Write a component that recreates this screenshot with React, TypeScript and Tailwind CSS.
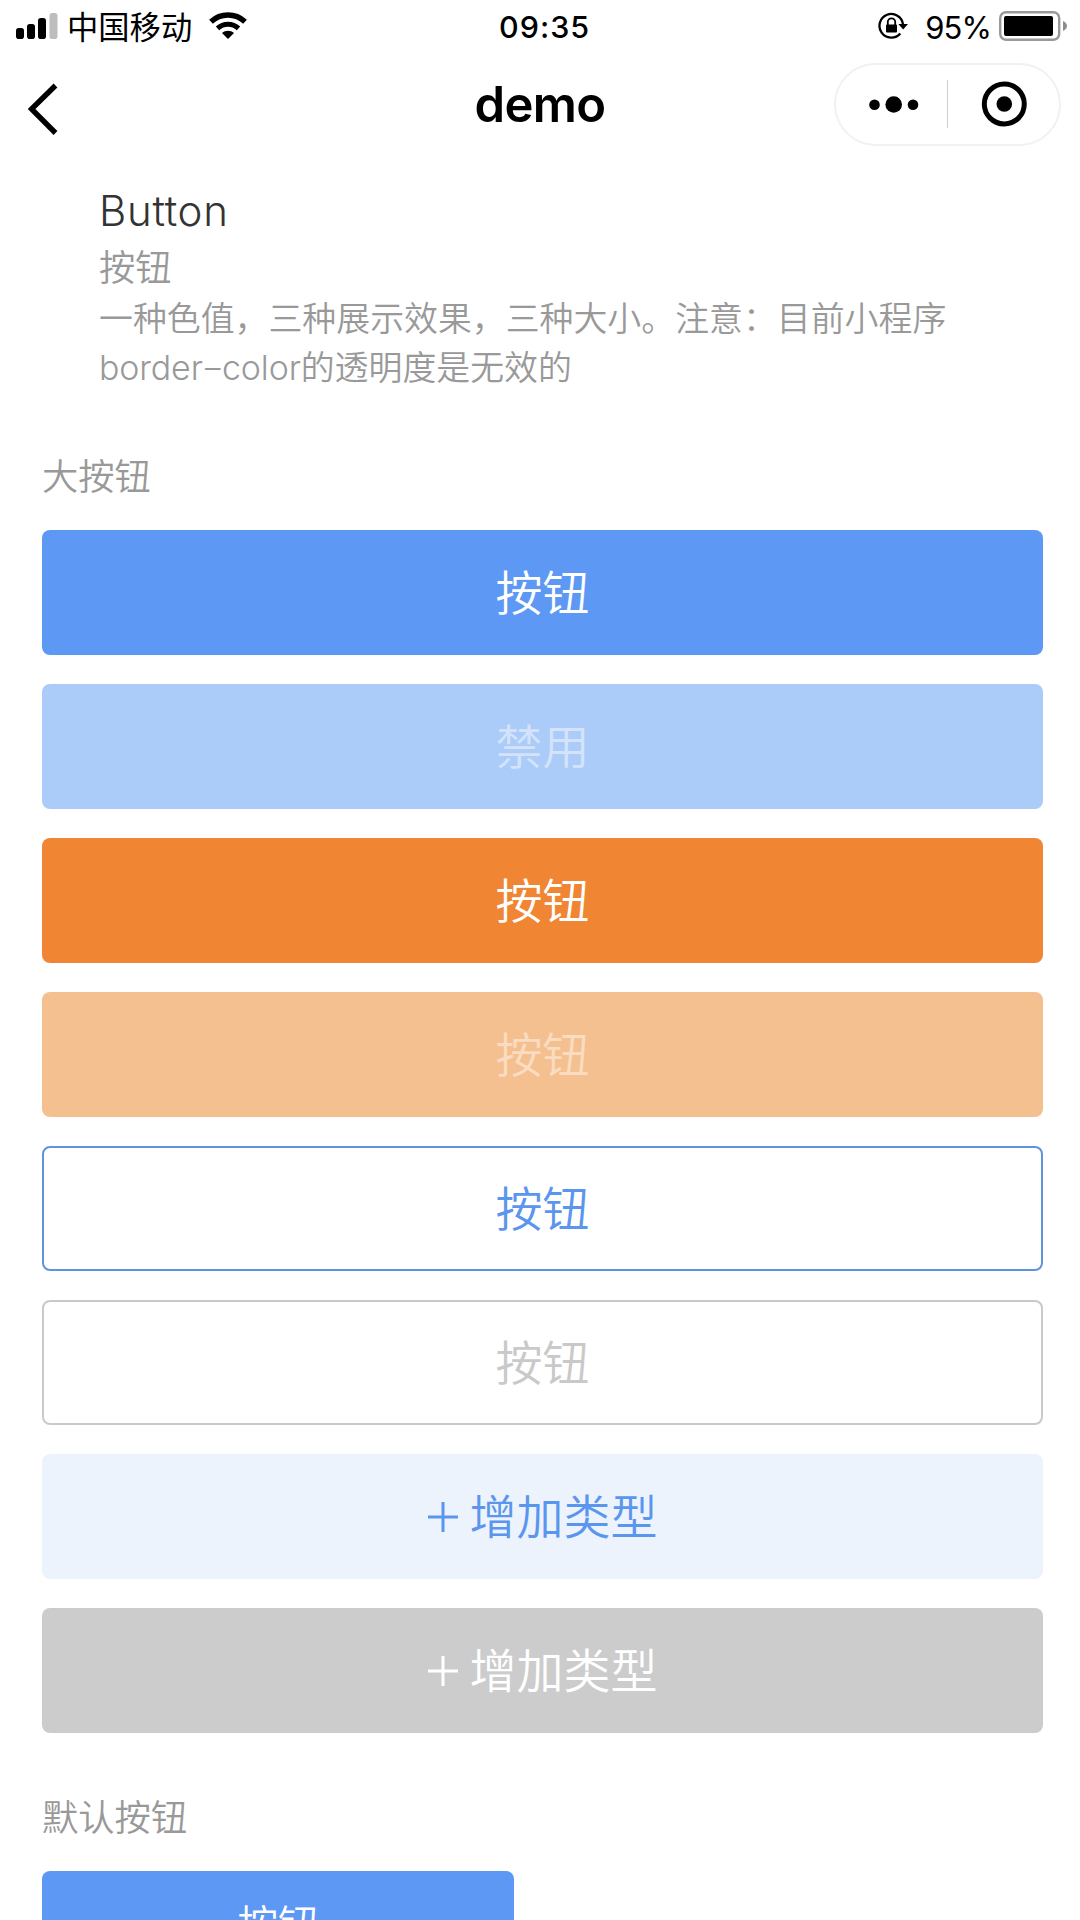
import clsx from "clsx";

const bigButtons = [
  { label: "按钮", className: "bg-[#5d98f4] text-white" },
  { label: "禁用", className: "bg-[#abcbf8] text-[#d4e3fb]" },
  { label: "按钮", className: "bg-[#f08534] text-white" },
  { label: "按钮", className: "bg-[#f5c090] text-[#f9dcc1]" },
  { label: "按钮", className: "border-2 border-[#5f94dc] text-[#5b96ee]" },
  { label: "按钮", className: "border-2 border-[#c9c9c9] text-[#c9c9c9]" },
  { label: "增加类型", plus: true, className: "bg-[#ecf3fd] text-[#5b96ee]" },
  { label: "增加类型", plus: true, className: "bg-[#cccccc] text-white" },
];

function SignalIcon() {
  return (
    <svg width="42" height="26" viewBox="0 0 42 26">
      <rect x="0" y="15" width="8" height="11" rx="2.8" />
      <rect x="11" y="11" width="8" height="15" rx="2.8" />
      <rect x="22" y="5" width="8" height="21" rx="2.8" />
      <rect x="33.5" y="0" width="8" height="26" rx="2.8" fill="#bdbdbd" />
    </svg>
  );
}

function WifiIcon() {
  return (
    <svg width="38" height="28" viewBox="0 0 38 28" fill="none" stroke="#000">
      <path d="M2 9.7C11.5 0.7 26.5 0.7 36 9.7" strokeWidth="5.4" />
      <path d="M8.5 16.3C14.5 10.8 23.5 10.8 29.5 16.3" strokeWidth="5" />
      <path d="M13 21C16.5 18 21.5 18 25 21L19 27Z" fill="#000" stroke="none" />
    </svg>
  );
}

function RotationLockIcon() {
  return (
    <svg width="30" height="28" viewBox="0 0 30 28" fill="none" stroke="#000">
      <path d="M22.3 21.4A11.8 11.8 0 1 1 25 12.5" strokeWidth="2.3" />
      <path d="M20.3 12H30L25.2 17.5Z" fill="#000" stroke="none" />
      <rect x="8" y="12.5" width="11" height="8" rx="1" fill="#000" stroke="none" />
      <path d="M9.8 14V10a3.7 3.7 0 0 1 7.4 0v4" strokeWidth="1.8" />
    </svg>
  );
}

function BatteryIcon() {
  return (
    <svg width="68" height="30" viewBox="0 0 68 30">
      <rect x="1.2" y="1.2" width="59" height="27.6" rx="6" fill="none" stroke="#999" strokeWidth="2.4" />
      <rect x="5" y="5" width="49" height="20" rx="2" />
      <path d="M64 10Q68 12 68 15T64 20Z" fill="#8e8e8e" />
    </svg>
  );
}

function StatusBar() {
  return (
    <div className="grid h-[54px] shrink-0 grid-cols-[499px_91px_1fr] items-center pb-[2px]">
      <div className="flex items-center pl-4">
        <SignalIcon />
        <span className="ml-[9px] pt-[5px] text-[31.3px] leading-none">中国移动</span>
        <span className="ml-[17px]">
          <WifiIcon />
        </span>
      </div>
      <div className="pt-[3px] text-[30.5px] leading-none font-medium tracking-[1px] whitespace-nowrap">09:35</div>
      <div className="flex items-center justify-end pr-[13px]">
        <RotationLockIcon />
        <span className="mr-[8px] ml-[17px] pt-[2px] text-[31px] leading-none tracking-[-0.9px]">95%</span>
        <BatteryIcon />
      </div>
    </div>
  );
}

function NavBar() {
  return (
    <header className="grid h-[102px] shrink-0 grid-cols-3 items-center">
      <svg className="mt-[7px] ml-7" width="32" height="52" viewBox="0 0 32 52" fill="none" stroke="#000" strokeWidth="5.4">
        <path d="M27.5 2.5L3.5 26L27.5 50" />
      </svg>
      <h1 className="pb-[2px] text-center text-[49px] leading-none font-semibold tracking-[-0.6px]">demo</h1>
      <div className="mr-[19px] mb-[2px] flex h-[83px] w-[227px] items-center justify-self-end rounded-full border-2 border-[#f1f1f1]">
        <svg width="111" height="48" viewBox="0 0 111 48">
          <circle cx="38.5" cy="24.8" r="5.3" />
          <circle cx="57.7" cy="24.5" r="8.3" />
          <circle cx="77" cy="24.8" r="5.3" />
        </svg>
        <span className="h-12 w-px bg-[#cfcfcf]" />
        <svg width="110" height="48" viewBox="0 0 110 48">
          <circle cx="56.3" cy="24" r="20" fill="none" stroke="#000" strokeWidth="5" />
          <circle cx="56.3" cy="24" r="7.8" />
        </svg>
      </div>
    </header>
  );
}

export default function App() {
  return (
    <div className="flex h-[1920px] w-[1080px] flex-col overflow-hidden bg-white font-['Inter','Noto_Sans_CJK_SC',sans-serif] text-black">
      <StatusBar />
      <NavBar />

      <section className="mt-[30px] shrink-0 pl-[99px] font-[350] text-[#999]">
        <h2 className="text-[42px] leading-[50px] font-light tracking-[0.7px] text-[#333]">Button</h2>
        <p className="mt-[7px] text-[36.3px] leading-[50px]">按钮</p>
        <p className="mt-[1px] w-[870px] text-[33.9px] leading-[49px]">
          一种色值，三种展示效果，三种大小。注意：目前小程序
          <br />
          <span className="font-light tracking-[-0.1px]">
            border<span className="mx-[2px] inline-block scale-x-150">-</span>color
          </span>
          的透明度是无效的
        </p>
      </section>

      <section className="mt-[60px] shrink-0 pr-[37px] pl-[42px] font-[350]">
        <h3 className="text-[36.3px] leading-[50px] text-[#999]">大按钮</h3>
        <div className="mt-[28px] grid gap-[29px]">
          {bigButtons.map(({ label, plus, className }, i) => (
            <button
              key={i}
              type="button"
              className={clsx("flex h-[125px] items-center justify-center rounded-lg text-[47px] leading-none", className)}
            >
              {plus && (
                <svg className="mr-[12px]" width="30" height="30" viewBox="0 0 30 30" stroke="currentColor" strokeWidth="3">
                  <path d="M0 15H30M15 0V30" />
                </svg>
              )}
              {label}
            </button>
          ))}
        </div>
      </section>

      <section className="mt-[60px] shrink-0 pl-[42px] font-[350]">
        <h3 className="text-[36.3px] leading-[50px] text-[#999]">默认按钮</h3>
        <button
          type="button"
          className="mt-[28px] h-[110px] w-[472px] rounded-lg bg-[#5d98f4] text-[40.5px] leading-none text-white"
        >
          按钮
        </button>
      </section>
    </div>
  );
}
